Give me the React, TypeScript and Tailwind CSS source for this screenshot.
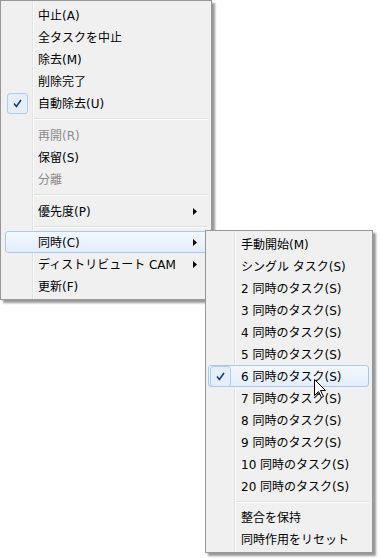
import React from "react";

type Item =
  | { kind: "sep"; h: number }
  | {
      kind: "item";
      label: string;
      disabled?: boolean;
      checked?: boolean;
      hot?: boolean;
      sub?: boolean;
    };

const FONT = { fontFamily: '"DejaVu Sans", "Noto Sans CJK JP", sans-serif' };

function Check() {
  return (
    <div className="w-[21px] h-[21px] ml-[1px] rounded-[3px] border border-[#aecbf0] bg-[#e6eefa] flex items-center justify-center">
      <svg width="9" height="9" viewBox="0 0 9 9">
        <path d="M1 4.6 L3.4 7.4 L8 1" fill="none" stroke="#17378f" strokeWidth="1.6" />
      </svg>
    </div>
  );
}

function Arrow() {
  return (
    <svg width="4" height="7" viewBox="0 0 4 7" className="shrink-0">
      <path d="M0 0 L4 3.5 L0 7 Z" fill="#000" />
    </svg>
  );
}

function Row({ it }: { it: Extract<Item, { kind: "item" }> }) {
  return (
    <div
      className={
        "relative h-[22px] flex items-center rounded-[3px] border " +
        (it.hot
          ? "border-[#a9c9ef] bg-gradient-to-b from-[#f4f8fe] to-[#e3edfb]"
          : "border-transparent")
      }
    >
      <div className="w-[32px] shrink-0 h-full flex items-center">
        {it.checked ? <Check /> : null}
      </div>
      <div
        className={
          "flex-1 text-[12px] leading-none whitespace-nowrap pt-[1px] " +
          (it.disabled ? "text-[#8d8d8d]" : "text-black")
        }
      >
        {it.label}
      </div>
      {it.sub ? (
        <div className="pr-[10px] flex items-center">
          <Arrow />
        </div>
      ) : null}
    </div>
  );
}

function Sep({ h, left }: { h: number; left: number }) {
  return (
    <div className="flex flex-col justify-center" style={{ height: h, paddingLeft: left }}>
      <div className="h-px bg-[#e0e0e0]" />
      <div className="h-px bg-white" />
    </div>
  );
}

function Menu({
  items,
  className,
  gutter,
}: {
  items: Item[];
  className: string;
  gutter: number;
}) {
  return (
    <div
      className={
        "absolute bg-[#f0f0f0] border border-[#979797] shadow-[3px_3px_2px_rgba(0,0,0,0.4)] " +
        className
      }
      style={FONT}
    >
      <div
        className="absolute top-0 bottom-0 w-[2px] flex pointer-events-none"
        style={{ left: gutter }}
      >
        <div className="w-px h-full bg-[#e2e3e3]" />
        <div className="w-px h-full bg-white" />
      </div>
      {items.map((it, i) =>
        it.kind === "sep" ? (
          <Sep key={i} h={it.h} left={gutter - 3} />
        ) : (
          <Row key={i} it={it} />
        )
      )}
    </div>
  );
}

const mainItems: Item[] = [
  { kind: "item", label: "中止(A)" },
  { kind: "item", label: "全タスクを中止" },
  { kind: "item", label: "除去(M)" },
  { kind: "item", label: "削除完了" },
  { kind: "item", label: "自動除去(U)", checked: true },
  { kind: "sep", h: 10 },
  { kind: "item", label: "再開(R)", disabled: true },
  { kind: "item", label: "保留(S)" },
  { kind: "item", label: "分離", disabled: true },
  { kind: "sep", h: 10 },
  { kind: "item", label: "優先度(P)", sub: true },
  { kind: "sep", h: 9 },
  { kind: "item", label: "同時(C)", sub: true, hot: true },
  { kind: "item", label: "ディストリビュート CAM", sub: true },
  { kind: "item", label: "更新(F)" },
];

const subItems: Item[] = [
  { kind: "item", label: "手動開始(M)" },
  { kind: "item", label: "シングル タスク(S)" },
  { kind: "item", label: "2 同時のタスク(S)" },
  { kind: "item", label: "3 同時のタスク(S)" },
  { kind: "item", label: "4 同時のタスク(S)" },
  { kind: "item", label: "5 同時のタスク(S)" },
  { kind: "item", label: "6 同時のタスク(S)", checked: true, hot: true },
  { kind: "item", label: "7 同時のタスク(S)" },
  { kind: "item", label: "8 同時のタスク(S)" },
  { kind: "item", label: "9 同時のタスク(S)" },
  { kind: "item", label: "10 同時のタスク(S)" },
  { kind: "item", label: "20 同時のタスク(S)" },
  { kind: "sep", h: 9 },
  { kind: "item", label: "整合を保持" },
  { kind: "item", label: "同時作用をリセット" },
];

function Cursor() {
  return (
    <svg
      width="13"
      height="20"
      viewBox="0 0 13 20"
      className="absolute left-[314px] top-[379px] pointer-events-none"
    >
      <path
        d="M0.5 0.5 L0.5 16.5 L4.5 12.5 L7.5 18.5 L9.5 17.5 L6.5 11.5 L11.5 11.5 Z"
        fill="#fff"
        stroke="#000"
        strokeWidth="1"
        strokeLinejoin="miter"
      />
    </svg>
  );
}

export default function App() {
  return (
    <div className="relative w-[381px] h-[558px] bg-white overflow-hidden">
      <Menu
        items={mainItems}
        className="left-0 top-0 w-[212px] h-[300px] pl-[4px] pr-[3px] pt-[3px]"
        gutter={31}
      />
      <Menu
        items={subItems}
        className="left-[205px] top-[230px] w-[168px] h-[323px] pl-[2px] pr-[3px] pt-[2px]"
        gutter={28}
      />
      <Cursor />
    </div>
  );
}
